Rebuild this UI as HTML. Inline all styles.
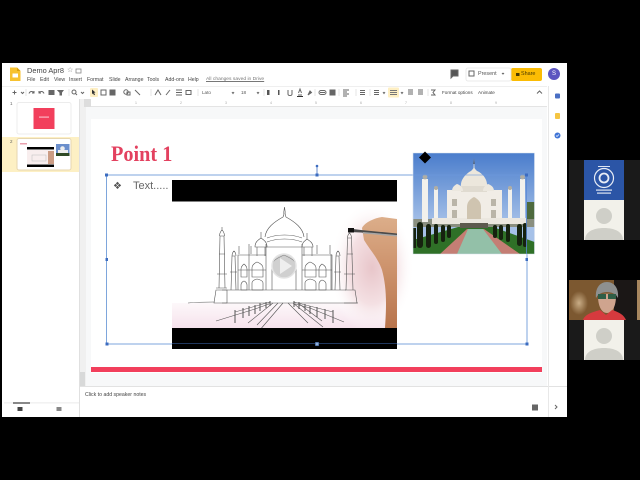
<!DOCTYPE html>
<html><head><meta charset="utf-8">
<style>
html,body{margin:0;padding:0;background:#000;}
body{width:640px;height:480px;position:relative;overflow:hidden;font-family:"Liberation Sans",sans-serif;}
#all{position:absolute;left:0;top:0;width:640px;height:480px;filter:blur(.35px);}
.a{position:absolute;white-space:nowrap;}
#w{left:2px;top:63px;width:565px;height:354px;background:#fff;}
.m{font-size:5.2px;color:#444;top:77px;line-height:6px;}
.t{font-size:4.6px;color:#555;top:90px;line-height:6px;}
</style></head><body><div id="all">
<div class="a" id="w"></div>
<!-- canvas -->
<div class="a" style="left:80px;top:99px;width:467px;height:287px;background:#f7f8f9;"></div>
<div class="a" style="left:2px;top:137px;width:77px;height:35px;background:#fdf0c4;"></div>
<div class="a" style="left:79px;top:99px;width:1px;height:318px;background:#e0e0e0;"></div>
<div class="a" style="left:80px;top:99px;width:6px;height:287px;background:#f0f0f0;"></div>
<div class="a" style="left:80px;top:372px;width:5px;height:14px;background:#d8d9d9;"></div>
<div class="a" style="left:86px;top:99px;width:461px;height:8px;background:#fff;border-bottom:1px solid #e4e4e4;box-sizing:border-box;"></div>
<div class="a" style="left:84px;top:99px;width:7px;height:8px;background:#ddd;"></div>
<div class="a" style="left:80px;top:386px;width:487px;height:1px;background:#e2e2e2;"></div>
<div class="a" style="left:91px;top:119px;width:451px;height:254px;background:#fff;"></div>
<div class="a" style="left:91px;top:367px;width:451px;height:5px;background:#f23f5c;"></div>
<div class="a" style="left:548px;top:86px;width:1px;height:331px;background:#e8e8e8;"></div>
<div class="a" style="left:2px;top:86px;width:545px;height:1px;background:#efefef;"></div>

<!-- header text -->
<div class="a" style="left:27px;top:67px;font-size:7.4px;color:#444;line-height:8px;">Demo Apr8</div>
<div class="a" style="left:67px;top:67px;font-size:7px;color:#777;line-height:8px;">☆</div>
<div class="a m" style="left:27px;">File</div>
<div class="a m" style="left:40px;">Edit</div>
<div class="a m" style="left:54px;">View</div>
<div class="a m" style="left:69px;">Insert</div>
<div class="a m" style="left:87px;">Format</div>
<div class="a m" style="left:109px;">Slide</div>
<div class="a m" style="left:125px;">Arrange</div>
<div class="a m" style="left:147px;">Tools</div>
<div class="a m" style="left:165px;">Add-ons</div>
<div class="a m" style="left:188px;">Help</div>
<div class="a m" style="left:206px;color:#777;text-decoration:underline;font-size:4.95px;">All changes saved in Drive</div>
<div class="a t" style="left:202px;">Lato</div>
<div class="a t" style="left:241px;">18</div>
<div class="a t" style="left:442px;color:#444;">Format options</div>
<div class="a t" style="left:478px;color:#444;">Animate</div>
<div class="a" style="left:478px;top:71px;font-size:5.4px;color:#555;line-height:7px;">Present</div>
<div class="a" style="left:511px;top:68px;width:31px;height:13px;background:#fbbc04;border-radius:2px;"></div>
<div class="a" style="left:521px;top:71px;font-size:5.4px;color:#4a3a00;line-height:7px;">Share</div>
<div class="a" style="left:548px;top:68px;width:12px;height:12px;border-radius:50%;background:#5c55c0;color:#fff;font-size:6px;line-height:12px;text-align:center;">S</div>
<!-- slide text -->
<div class="a" style="left:111px;top:141px;font-family:'Liberation Serif',serif;font-weight:bold;font-size:22.5px;line-height:25px;color:#e3415f;transform:scaleX(.9);transform-origin:0 0;">Point 1</div>
<div class="a" style="left:113px;top:180px;font-size:10px;line-height:13px;color:#555;font-family:'DejaVu Sans',sans-serif;">❖</div>
<div class="a" style="left:133px;top:179px;font-size:11px;line-height:14px;color:#666;">Text.....</div>
<div class="a" style="left:85px;top:392px;font-size:5.2px;line-height:7px;color:#444;">Click to add speaker notes</div>
<div class="a" style="left:10px;top:101px;font-size:4.5px;color:#666;line-height:6px;">1</div>
<div class="a" style="left:10px;top:139px;font-size:4.5px;color:#666;line-height:6px;">2</div>

<svg class="a" style="left:0;top:0;" width="640" height="480" viewBox="0 0 640 480">
<defs>
<linearGradient id="sky" x1="0" y1="0" x2="0" y2="1"><stop offset="0" stop-color="#4a7dcc"/><stop offset="0.7" stop-color="#a6c1e8"/></linearGradient>
<radialGradient id="pk"><stop offset="0" stop-color="#e8c6ca"/><stop offset="0.55" stop-color="#f4e0e3"/><stop offset="1" stop-color="#ffffff" stop-opacity="0"/></radialGradient>
<linearGradient id="fl" x1="0" y1="0" x2="0" y2="1"><stop offset="0" stop-color="#fdf8fa"/><stop offset="1" stop-color="#f6e2ec"/></linearGradient>
<linearGradient id="sk" x1="0" y1="0" x2="0" y2="1"><stop offset="0" stop-color="#dcae8a"/><stop offset="0.4" stop-color="#cf9670"/><stop offset="1" stop-color="#b8744c"/></linearGradient>
<radialGradient id="bg"><stop offset="0" stop-color="#c9ad86"/><stop offset="1" stop-color="#7c5830"/></radialGradient>
</defs>
<!-- logo -->
<path d="M10 67.500h7l3.500 3.500v10h-10.500z" fill="#f7c230"/><path d="M17 67.500v3.500h3.500z" fill="#d9a010"/><rect x="12.500" y="73.500" width="5.500" height="4" fill="#fff"/>
<!-- folder, toolbars -->
<rect x="76" y="69" width="5" height="4" fill="none" stroke="#888" stroke-width=".8"/>
<g stroke="#666" stroke-width="1" fill="none">
<path d="M12.500 92.500h4M14.500 90.500v4"/><path d="M21 92l1.500 1.500 1.500-1.500"/>
<path d="M29 93.500c1-2.500 3-2.500 5-1M34 91v2h-2"/><path d="M44 93.500c-1-2.500-3-2.500-5-1M39 91v2h2"/>
<rect x="49" y="90.500" width="5" height="4" fill="#666"/><path d="M58 90.500h5l-1.500 2v2.500h-1.500v-2.500z" fill="#666"/>
<circle cx="74" cy="92" r="2"/><path d="M75.500 93.500l1.500 1.500"/><path d="M81 92l1.500 1.500 1.500-1.500"/>
<rect x="101" y="90" width="5" height="5"/><rect x="110" y="90" width="5" height="5" fill="#666"/>
<circle cx="126" cy="92" r="2.200"/><rect x="127" y="92" width="3" height="3"/><path d="M135 90l5 5"/>
<path d="M155 95l3-5 3 5" /><path d="M166 95l4-5"/><path d="M176 90h6M176 92.500h6M176 95h6"/><rect x="186" y="90.500" width="5" height="4"/>
<path d="M232 92l1 1.500 1-1.500M257 92l1 1.500 1-1.500"/>
<path d="M288 90v4c0 2 4 2 4 0v-4"/><path d="M298 95h4M298.500 93l1.500-4 1.500 4"/><path d="M308 95l2-4 1.500 1.500z" fill="#666"/>
<path d="M320 92.500h5"/><rect x="319" y="90.500" width="7" height="4" rx="2"/><rect x="330" y="90" width="5" height="5" fill="#666"/>
<path d="M343 90h6M343 92h4M343 94h6M343 96h4"/><path d="M360 90.500h5M360 92.500h5M360 94.500h5"/>
<path d="M374 90.500h5M374 92.500h5M374 94.500h5"/><path d="M383 92l1 1.500 1-1.500M401 92l1 1.500 1-1.500"/>
<path d="M408 90h5M408 92h5M408 94h5"/><path d="M418 90h5M418 92h5M418 94h5"/>
<path d="M431 90h4l-2 2.500 2 2.500h-4"/><path d="M537 93.500l2.500-2.500 2.500 2.500" stroke-width="1"/>
<path d="M451 70h7v6h-5l-2 2z" fill="#555"/><rect x="469" y="71" width="5" height="5"/>
<path d="M502 73l1 1 1-1"/>
<path d="M555 405l2 2-2 2" /></g>
<rect x="90" y="88" width="8" height="9" rx="1" fill="#feefc3"/><path d="M92 89.500l3.500 3-1.500.3 1 2-1 .5-1-2-1 1z" fill="#333"/>
<rect x="388" y="87.500" width="11" height="10" rx="1" fill="#feefc3"/><path d="M390 90.500h7M390 92.500h7M390 94.500h7" stroke="#777" stroke-width="1"/>
<g fill="#555"><rect x="267" y="90" width="2.500" height="5"/><rect x="278" y="90" width="1.500" height="5"/></g>
<rect x="297" y="96" width="6" height="1" fill="#333"/>
<g stroke="#e0e0e0" stroke-width=".8"><path d="M26 89v7M69 89v7M151 89v7M198 89v7M264 89v7M315 89v7M339 89v7M356 89v7M370 89v7M428 89v7"/></g>
<rect x="466" y="68" width="45" height="13" rx="2" fill="none" stroke="#e5e5e5" stroke-width=".8"/>
<rect x="516" y="73" width="3.500" height="3" fill="#4a3a00"/>
<!-- ruler ticks -->
<g fill="#aaa" font-size="3.500" font-family="Liberation Sans"><text x="135" y="104">1</text><text x="180" y="104">2</text><text x="225" y="104">3</text><text x="270" y="104">4</text><text x="315" y="104">5</text><text x="360" y="104">6</text><text x="405" y="104">7</text><text x="450" y="104">8</text><text x="495" y="104">9</text></g>
<!-- side panel icons -->
<rect x="555" y="93.500" width="5" height="5" rx="1" fill="#4a6fc4"/>
<rect x="555" y="113" width="5" height="6" rx="1" fill="#f5c542"/>
<circle cx="557.500" cy="135.500" r="3" fill="#3f74d6"/><path d="M556 135.500l1 1 2-2" stroke="#fff" stroke-width=".7" fill="none"/>
<!-- thumbs -->
<rect x="17" y="102.500" width="54" height="31.500" rx="2" fill="#fff" stroke="#ececec"/>
<rect x="33.500" y="108" width="21" height="21" fill="#f23f5c"/>
<rect x="39" y="116.500" width="10" height="1.200" fill="#f9b7c2"/>
<rect x="17" y="138.500" width="54" height="31.500" rx="2" fill="#fff" stroke="#e6d6b0" stroke-width="1"/>
<rect x="20" y="143" width="7" height="1.500" fill="#e9a0ae"/>
<rect x="27" y="147" width="27" height="2.500" fill="#000"/>
<rect x="27" y="150" width="27" height="14" fill="#f8eeee"/><rect x="48" y="151" width="6" height="13" fill="#cb9c84"/>
<rect x="32" y="155" width="14" height="6" fill="none" stroke="#bbb" stroke-width=".5"/>
<rect x="27" y="164.500" width="27" height="2.500" fill="#000"/>
<rect x="56" y="144" width="13.500" height="12" fill="#6b8fcc"/><rect x="58" y="150" width="10" height="3" fill="#eee"/><circle cx="62.500" cy="148.500" r="2.300" fill="#eee"/><rect x="56" y="153" width="13.500" height="3" fill="#2f4a26"/>
<!-- sidebar bottom -->
<rect x="4" y="402.500" width="75" height=".8" fill="#e5e5e5"/><rect x="13" y="402.500" width="17" height="1" fill="#111"/>
<rect x="17.500" y="407" width="5" height="4" fill="#444"/><rect x="56.500" y="407" width="5" height="4" fill="#888"/>
<rect x="532" y="404.500" width="6" height="6" fill="#666"/>

<!-- selection box -->
<rect x="106.500" y="175" width="420.500" height="169" fill="none" stroke="#7ea6dc" stroke-width="1"/>
<path d="M317 167v8" stroke="#3c6cc0" stroke-width=".8"/>
<!-- video -->
<rect x="172" y="180" width="225" height="169" fill="#fff"/>
<path d="M172 303h225v25H172z" fill="url(#fl)"/>
<ellipse cx="372" cy="268" rx="42" ry="66" fill="url(#pk)"/>
<rect x="172" y="180" width="225" height="21.500" fill="#000"/>
<g fill="none" stroke="#555" stroke-width=".6">
<!-- dome -->
<path d="M265 237c1-9 9-15 18-20 1-2 1-4 .8-5l.7-5 .7 5c-.2 1 0 3 .8 5 9 5 17 11 18 20"/>
<path d="M267 238c10-4 25-4 35 0M267 242c10-4 25-4 35 0"/>
<!-- main facade -->
<path d="M266 244v46M302 244v46M266 247h36"/>
<path d="M272 290v-24c0-6 6-8 12-11 6 3 12 5 12 11v24"/>
<!-- small domes -->
<path d="M255 247c0-5 3-7 6-9 3 2 6 4 6 9zM261 238v-6"/><path d="M302 247c0-5 3-6 5-8 3 2 6 4 6 8zM307 239v-6"/>
<path d="M257 247v9M265 247v9M304 247v9M312 247v9"/>
<!-- wings -->
<path d="M238 290v-35h28M302 255h30v35M239 254v-8M249 254v-10M249 290v-36M251 254v-8M317 254v-9M330 254v-9M331 290v-36"/>
<path d="M238 270h28M302 270h30"/>
<path d="M241 277v-8c0-3 3-5 3-5s3 2 3 5v8zM252 277v-9c0-4 5-6 5-6s6 2 6 6v9zM305 277v-9c0-4 5-6 5-6s6 2 6 6v9zM319 277v-8c0-3 3-5 3-5s4 2 4 5v8z"/>
<path d="M241 290v-5c0-3 3-4 3-4s3 1 3 4v5zM252 290v-7c0-3 5-4 5-4s6 1 6 4v7zM305 290v-7c0-3 5-4 5-4s6 1 6 4v7zM319 290v-6c0-3 3-4 3-4s4 1 4 4v6z"/>
<!-- minarets -->
<path d="M219 288l1-52h4l1 52M219.500 236c0-4 2.500-6 2.500-6s2.500 2 2.500 6M222 230v-3M217 274h10M219 254h6"/>
<path d="M216 290h11v13h-13zM216 288h11"/>
<path d="M231 290l1-34h3l1 34M232 256c0-3 2-5 2-5s2 2 2 5M230 272h7"/>
<path d="M335 290l1-34h3l1 34M336 256c0-3 2-5 2-5s2 2 2 5M334 272h7"/>
<path d="M346 290l1.500-52h4l1.500 52M347.500 238c0-3 2-5 2-5s2 2 2 5M344 274h11M347 254h6"/>
<path d="M345 290h10l2 13h-13"/>
<!-- base -->
<path d="M222 290h124M188 303c10-1 20-1 26-1M222 303h122M344 303h14"/>
<path d="M273 303l-25 20M278 303l-21 22M283 303l-24 28M293 303l30 24M288 303l20 20M298 303l24 18"/>
<path d="M216 321l39-12 14-5M295 304l15 4 34 14"/>
</g>
<g stroke="#555" stroke-width="1">
<path d="M235 310v13M243 308v10M249 306v10M255 305v9M260 303v8M266 302v6M270 301v5M294 301v6M299 302v7M305 304v7M310 306v8M317 307v10M325 309v10M333 310v13"/>
<path d="M235 312l35-10M294 302l39 10" stroke-width=".5"/>
</g>
<!-- hand -->
<path d="M362 228C365 222 375 218 382 217L397 219V328H385C387 300 386 285 382 270C378 258 370 250 364 240Z" fill="url(#sk)"/>
<path d="M349 228.500l12 1.500 36 3.500v2.500l-36-3.500-12-.5z" fill="#4a4a4a"/><path d="M363 232l34 3v1.500l-34-3z" fill="#a5a5a5"/>
<rect x="348" y="228" width="6" height="4.500" fill="#111"/>
<rect x="172" y="328" width="225" height="21" fill="#000"/>
<!-- play -->
<circle cx="284" cy="266" r="12" fill="#aaa" fill-opacity=".55" stroke="#e4e4e4" stroke-width="1.500"/>
<path d="M280 258l12 8-12 8z" fill="#eee"/>
<path d="M172 343.500h225" stroke="#2b4a7e" stroke-width=".8"/>
<!-- handles -->
<g fill="#3c6cc0"><rect x="105" y="173.500" width="3" height="3"/><rect x="315.500" y="173.500" width="3" height="3"/><circle cx="317" cy="166" r="1.300"/><rect x="105.500" y="342.500" width="3" height="3"/><rect x="105.500" y="258" width="2.500" height="3"/><rect x="525.500" y="342.500" width="3" height="3"/><rect x="525.500" y="258" width="2.500" height="3"/></g>
<rect x="315.300" y="342.300" width="3.500" height="3.500" fill="#8fb0dc" stroke="#2b4a7e" stroke-width=".5"/>
<!-- photo -->
<rect x="413" y="153" width="121.500" height="101" fill="url(#sky)"/>
<rect x="527" y="202" width="7.500" height="24" fill="#4e6a3e"/>
<rect x="413" y="219" width="121.500" height="8" fill="#8a8f80"/>
<!-- taj -->
<path d="M461 187c-1-8 6-14 10-16 1-1 2-2 2.500-3l.5-10 .5 10c.5 1 1.500 2 2.500 3 5 2 11 8 10 16z" fill="#ece7dc"/>
<path d="M474 158l-.6 6h1.200z" fill="#555"/>
<rect x="447" y="190" width="55" height="31" fill="#f1ede6"/>
<rect x="461" y="186" width="26" height="6" fill="#e0dbd0"/>
<path d="M452 191c0-4 3-6 5-7 3 1 6 3 6 7zM483 191c0-4 3-6 5-7 3 1 6 3 6 7z" fill="#ece8df"/>
<g fill="#f2f1ec"><rect x="422" y="179" width="6" height="43"/><rect x="434" y="189" width="4" height="33"/><rect x="508" y="189" width="4" height="33"/><rect x="520" y="179" width="5" height="43"/></g>
<g fill="#b0aea4"><circle cx="425" cy="177" r="2.400"/><circle cx="436" cy="188" r="2"/><circle cx="510" cy="188" r="2"/><circle cx="522.500" cy="177" r="2.400"/></g>
<rect x="432" y="218" width="94" height="6" fill="#ebe7df"/>
<path d="M467 219v-12c0-5 3-8 7-10 4 2 7 5 7 10v12z" fill="#cfc4b0"/>
<g fill="#bab5a8"><rect x="452" y="199" width="5" height="7"/><rect x="491" y="199" width="5" height="7"/><rect x="452" y="210" width="5" height="8"/><rect x="491" y="210" width="5" height="8"/></g>
<path d="M413 254v-14l45-13h35l41.500 15v12z" fill="#2f7027"/>
<path d="M440 254l27-25h5l-15 25zM520 254l-36-25h-4l22 25z" fill="#c47e74"/>
<path d="M457 254l11-25h15l19 25z" fill="#93c0a8"/>
<rect x="460" y="223" width="28" height="5" fill="#5d5a4e"/>
<g fill="#16220f"><rect x="417" y="222" width="6" height="26" rx="3"/><rect x="426" y="224" width="5" height="24" rx="2.500"/><rect x="434" y="224" width="4" height="20" rx="2"/><rect x="441" y="225" width="4" height="17" rx="2"/><rect x="447" y="225" width="4" height="13" rx="2"/><rect x="413" y="228" width="3" height="20"/>
<rect x="493" y="225" width="4" height="13" rx="2"/><rect x="499" y="225" width="4" height="15" rx="2"/><rect x="506" y="224" width="4" height="18" rx="2"/><rect x="517" y="224" width="5" height="22" rx="2.500"/><rect x="523" y="223" width="4" height="24" rx="2"/></g>
<path d="M413 153h121.500v101H413z" fill="none" stroke="#d8e2ee" stroke-width=".6"/>
<path d="M419 157.500l6-6 6 6-6 6z" fill="#000"/>
<path d="M413 175h114" stroke="#6f9ade" stroke-width=".8" opacity=".8"/>
<path d="M526.500 175v79" stroke="#5b8ad6" stroke-width=".8"/>
<rect x="525" y="173.500" width="3" height="3" fill="#3c6cc0"/>
<!-- participants -->
<rect x="569" y="160" width="71" height="80" fill="#1a1a1a"/>
<rect x="584" y="160" width="40" height="40" fill="#2b55a6"/>
<circle cx="604" cy="178" r="9.500" fill="none" stroke="#e8edf6" stroke-width="1.200"/>
<circle cx="604" cy="178" r="4.500" fill="none" stroke="#e8edf6" stroke-width="1.800"/>
<rect x="596" y="189.500" width="16" height="1.200" fill="#dfe6f2"/><rect x="597" y="192.500" width="14" height="1.200" fill="#dfe6f2"/><rect x="598" y="166" width="12" height="1" fill="#dfe6f2"/>
<rect x="584" y="200" width="40" height="40" fill="#f2f1ea"/>
<circle cx="604" cy="216" r="8" fill="#cfcfc8"/><path d="M585 240c0-8 8-12 19-12s19 4 19 12z" fill="#cfcfc8"/>
<rect x="569" y="320" width="71" height="40" fill="#1a1a1a"/>
<rect x="584" y="320" width="40" height="40" fill="#f2f1ea"/>
<circle cx="604" cy="336" r="8" fill="#cfcfc8"/><path d="M585 360c0-8 8-12 19-12s19 4 19 12z" fill="#cfcfc8"/>
<rect x="569" y="280" width="71" height="40" fill="#7c5830"/>
<ellipse cx="579" cy="303" rx="9" ry="12" fill="url(#bg)"/>
<rect x="614" y="280" width="23" height="40" fill="#1b1716"/>
<rect x="637" y="280" width="3" height="40" fill="#a8875f"/>
<path d="M596 298c-1-10 4-16 11-16s12 6 11 16l-2-3c-5-4-13-4-18 0z" fill="#8e9090"/>
<path d="M598 296c2-3 16-3 18 0 0 9-3 17-9 17s-9-8-9-17z" fill="#cfa48e"/>
<rect x="598" y="294" width="8" height="5" fill="#2f5d46"/><rect x="608" y="294" width="8" height="5" fill="#2f5d46"/>
<path d="M583 320c2-6 10-8 17-10l6 5 6-5c7 2 12 5 14 10z" fill="#d63a3e"/>
</svg>
</div></body></html>
